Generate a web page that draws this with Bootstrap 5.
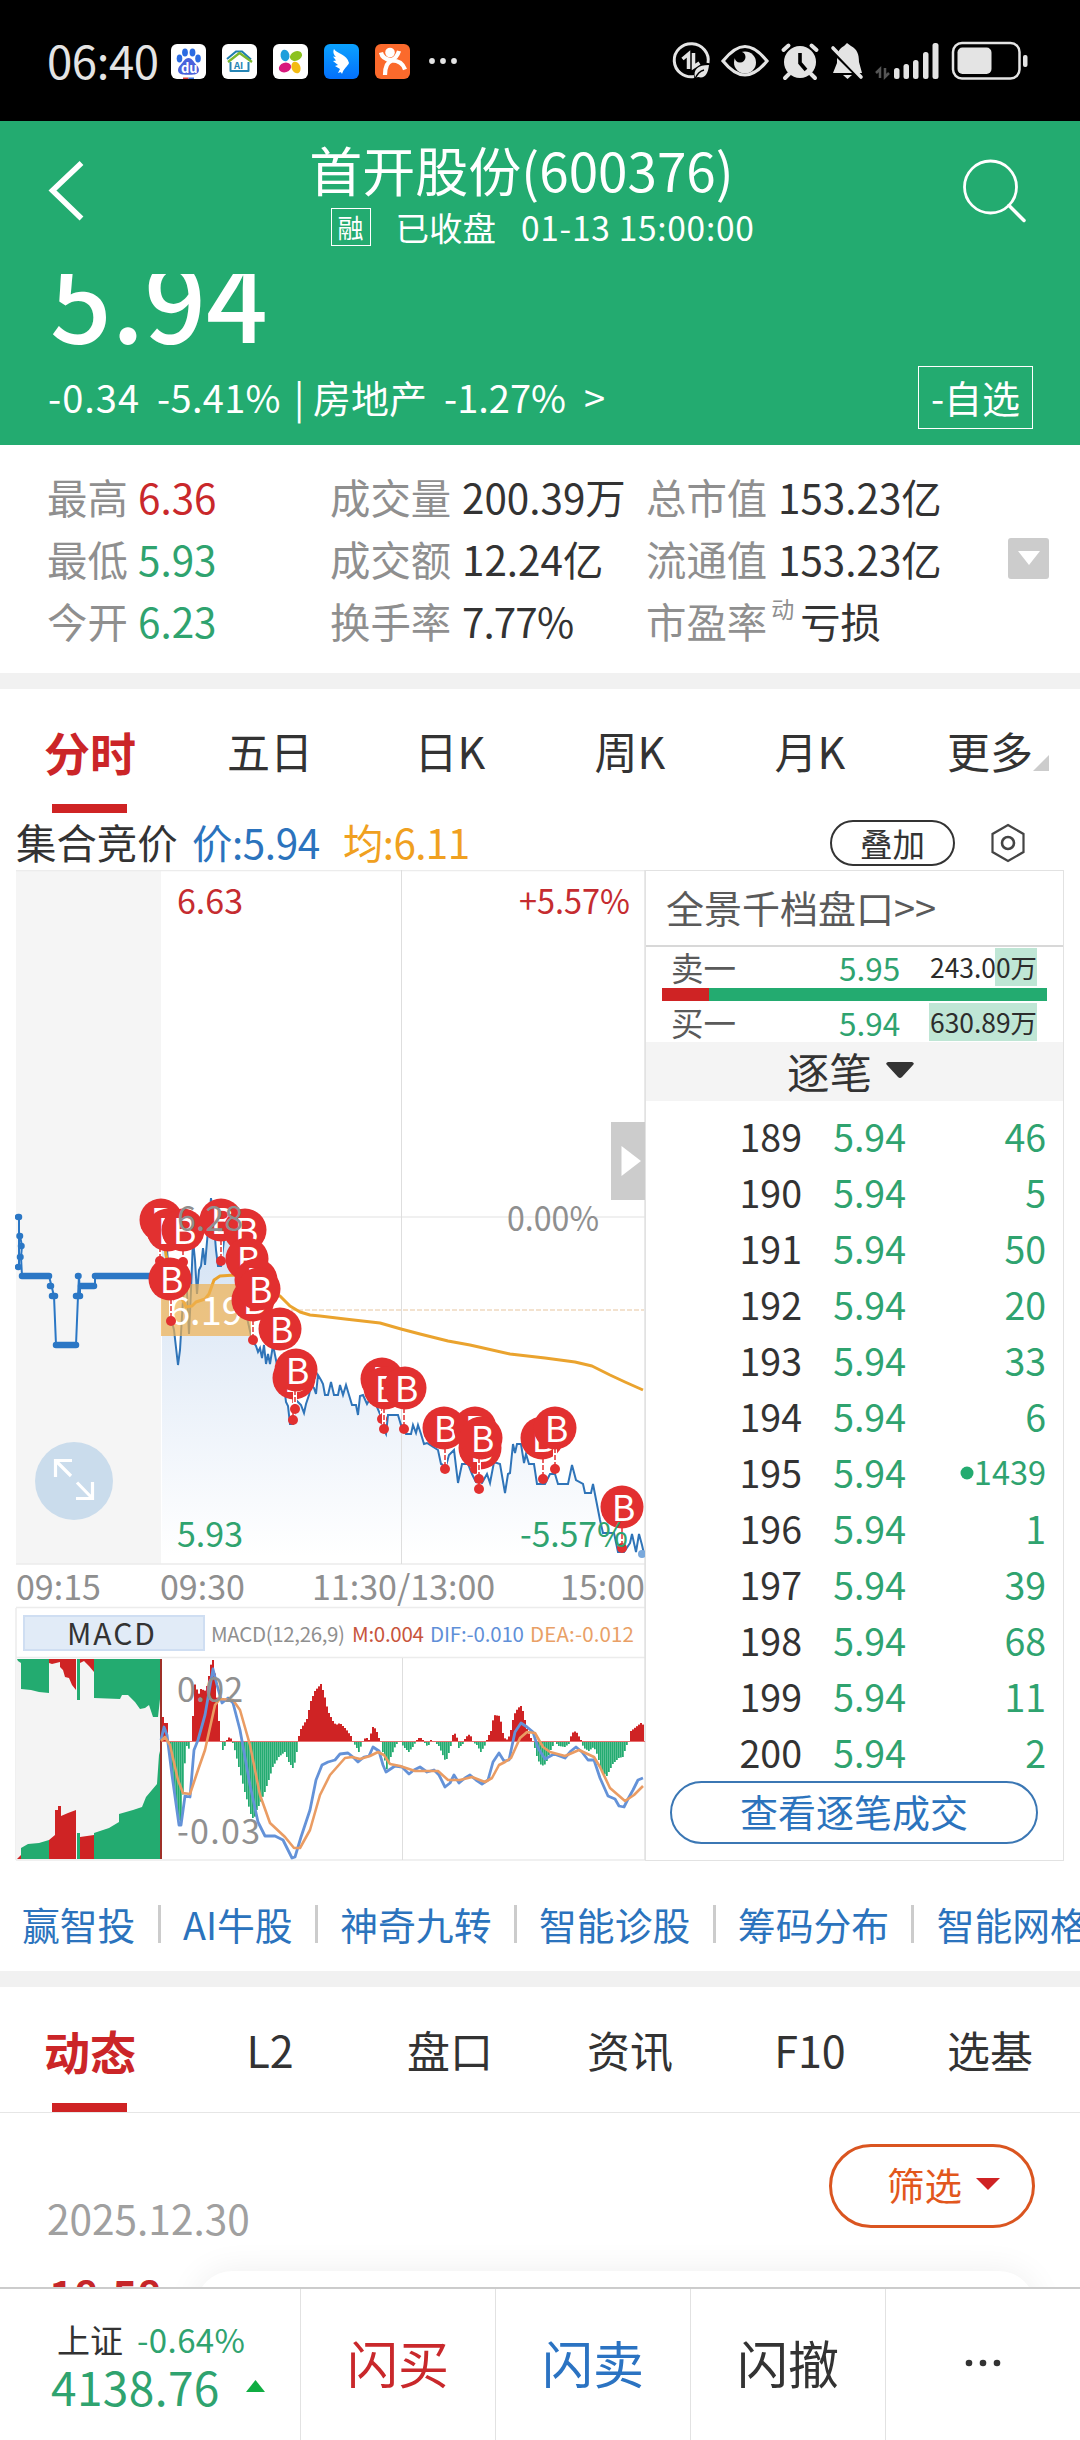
<!DOCTYPE html>
<html lang="zh-CN">
<head>
<meta charset="utf-8">
<meta name="viewport" content="width=device-width, initial-scale=1">
<title>首开股份(600376)</title>
<link href="https://cdn.jsdelivr.net/npm/bootstrap@5.3.0/dist/css/bootstrap.min.css" rel="stylesheet">
<style>
:root{--up:#c9282b;--down:#2fa36f;--brand:#23ab70;--ink:#333;--mute:#8f8f8f;--link:#2b73bd}
body{width:1080px;height:2440px;overflow:hidden;background:#fff;color:var(--ink);font-family:"Noto Sans CJK SC",sans-serif;line-height:1;white-space:nowrap}
svg{display:block;flex:none}
svg text{font-family:"Noto Sans CJK SC",sans-serif}
.up{color:var(--up)}.down{color:var(--down)}.mute{color:var(--mute)}
.status-bar{height:121px;background:#000;color:#e4e4e4;padding:0 50px 2px 47px}
.clock{font-size:45.5px;width:124px;letter-spacing:-.4px}
.app-icons{gap:16px}
.app-head{height:153px;background:var(--brand);color:#fff;padding:0 53px 0 48px}
.head-mid{width:640px;padding-top:20px}
.head-title{font-size:53px;height:56px;line-height:56px;margin-right:6px}
.head-sub{font-size:33.5px;height:40px;margin:10px 0 0 36px}
.rong{width:40px;height:38px;border:1px solid #fff;font-size:26px}
.quote{height:171px;background:var(--brand);color:#fff;padding:0 47px 0 48px}
.big-wrap{height:88px;overflow:hidden}
.big-price{font-size:108.5px;line-height:120px;margin-top:-38px;font-weight:500;padding-left:2px}
.quote-line{font-size:38px;height:71px}
.self-btn{width:115px;height:63px;border:1px solid #fff;font-size:38px}
.stats{height:228px;padding-top:22px;font-size:40.4px}
.stats .line{height:62px}
.c1{width:330px;padding-left:47px}.c2{width:316px}.c3{width:362px}
.c1 span:first-child{width:91px}.c2 span:first-child{width:132px}.c3 span:first-child{width:132px}
.sup{font-size:23px;align-self:flex-start;padding-top:6px;width:25px}
.drop-btn{width:41px;height:41px;background:#ccc;border-radius:3px}
.strip{height:16px;background:#f1f1f1}
.tabs-row{height:125px}
.tabs-row .tab-item{width:180px;font-size:43px;position:relative;color:var(--ink);padding:0}
.tabs-row .tab-item.active{color:#cb2528;font-weight:700;font-size:46px}
.tabs-row .tab-item.active::after{content:"";position:absolute;left:52px;bottom:0;width:75px;height:9px;background:#cf2324}
.corner{position:absolute;left:133px;bottom:42px}
.info-row{height:57px;padding:0 54px 0 16px;font-size:40.4px}
.pill{width:125px;height:46px;border:2px solid #333;border-radius:23px;font-size:32.5px;margin-top:2px}
.board{height:991px;padding-left:15px}
.depth{width:419px;border:1px solid #e2e2e2;margin-left:-1px}
.all-levels{height:76px;border-bottom:2px solid #d8d8d8;font-size:38px;color:#5a5a5a;padding:0 0 2px 20px}
.lvl{height:40px;padding:0 25px 0 25px;font-size:32.5px}
.lvl .who{width:168px;color:#5a5a5a}
.lvl .prc{width:90px;font-size:31.5px}
.lvl .qty{width:108px;height:38px;font-size:26.4px;color:#2c2c2c;padding-right:0}
.bs-bar{height:13px;margin:1px 16px 1px;background:var(--brand)}
.bs-bar div{background:#cf2324;width:47px}
.tick-head{height:59px;background:#f4f4f4;font-size:42.5px;padding:0 8px 2px 0}
.tick{height:56px;font-size:37.5px}
.tick .no{width:156px}.tick .p{width:104px}.tick .v{width:140px}
.detail-btn{width:368px;height:63px;border:2px solid #3b77b4;border-radius:32px;color:var(--link);font-size:38px;margin:2px 0 0 24px;padding-bottom:3px}
.links{height:110px;font-size:37.8px;color:var(--link);padding:15px 0 0 22px;overflow:hidden}
.links span{flex:none}
.links i{flex:none;width:3px;height:38px;background:#ccc;margin:0 22.3px}
.feed{height:175px;border-top:1px solid #e6e6e6;position:relative;overflow:hidden}
.filter-btn{position:absolute;right:45px;top:31px;width:206px;height:84px;border:3px solid #da5520;border-radius:42px;color:#e2571c;font-size:37.5px;padding:0 0 5px 23px}
.feed-date{position:absolute;left:47px;top:85px;font-size:40.6px;color:#a0a0a0}
.feed-time{position:absolute;left:49px;top:157px;font-size:42px;line-height:48px;font-weight:700;color:#c62629}
.feed-card{position:absolute;left:196px;right:45px;top:158px;height:90px;background:#fff;border-radius:36px;box-shadow:0 0 34px rgba(0,0,0,.07)}
.trade-bar{height:153px;border-top:2px solid #ccc}
.trade-bar>div+div{width:195px;border-left:1px solid #e2e2e2;font-size:51px;padding-bottom:4px}
.idx{width:300px;padding:31px 0 0 57px}
.idx .l1{font-size:33px;height:38px}.idx .l2{font-size:46px;height:56px;margin-left:-6px}
</style>
<script src="https://cdn.jsdelivr.net/npm/bootstrap@5.3.0/dist/js/bootstrap.bundle.min.js"></script>
</head>
<body class="d-flex flex-column">

<div class="status-bar d-flex align-items-center justify-content-between">
  <div class="d-flex align-items-center">
    <span class="clock">06:40</span>
    <div class="app-icons d-flex align-items-center pt-1">
      <svg width="35" height="35" viewBox="0 0 35 35"><rect width="35" height="35" rx="6" fill="#fff"/><g fill="#2a6be2"><ellipse cx="8.500" cy="14.500" rx="2.800" ry="4"/><ellipse cx="14" cy="8.500" rx="2.900" ry="3.900"/><ellipse cx="21.500" cy="8.500" rx="2.900" ry="3.900"/><ellipse cx="27" cy="14.500" rx="2.800" ry="4"/></g><path d="M17.500 14c4 0 5 4 8 7 4 4 3 9-2 9.500-3 .3-9 .3-12 0-5-.5-6-5.500-2-9.500 3-3 4-7 8-7z" fill="#4a62dc"/><text x="10" y="28.500" font-size="13" font-weight="700" fill="#fff">du</text><path d="M12 33.500h5.500V35H12z" fill="#d43b3b"/><path d="M17.500 33.500H23V35h-5.500z" fill="#3b6fd4"/></svg>
      <svg width="35" height="35" viewBox="0 0 35 35"><rect width="35" height="35" rx="6" fill="#fff"/><path d="M5 15 14 7.500h6l9 8" fill="none" stroke="#1f7fb0" stroke-width="2"/><path d="M6 18l11.500-9L30 18" fill="none" stroke="#7ab82e" stroke-width="2.300"/><path d="M8.500 18v9h18v-9" fill="none" stroke="#2585b5" stroke-width="2" stroke-linejoin="round"/><text x="12" y="24.500" font-size="9.500" font-weight="700" fill="#2585b5">AI</text></svg>
      <svg width="35" height="35" viewBox="0 0 35 35"><rect width="35" height="35" rx="6" fill="#fff"/><ellipse cx="12" cy="11.500" rx="4.400" ry="5.800" fill="#1f9fdc" transform="rotate(-12 12 11.500)"/><ellipse cx="23" cy="12" rx="6.300" ry="4.600" fill="#8cc220" transform="rotate(-22 23 12)"/><ellipse cx="12" cy="23.500" rx="6.300" ry="4.800" fill="#d8197d" transform="rotate(-18 12 23.500)"/><ellipse cx="23" cy="23.500" rx="4.400" ry="6" fill="#f3bb10" transform="rotate(-20 23 23.500)"/></svg>
      <svg width="35" height="35" viewBox="0 0 35 35"><defs><linearGradient id="wing" x2="0" y2="1"><stop stop-color="#0aa2ff"/><stop offset="1" stop-color="#0470fb"/></linearGradient></defs><rect width="35" height="35" rx="6" fill="url(#wing)"/><path d="M10 5c3 5 13 5 15 14-2 4-5 5-7 11-1-2-1-2-4-1l2-4-5-3 3-1-5-4 3-.5-3-4 3 .5C9 10 9 7 10 5z" fill="#fff"/></svg>
      <svg width="35" height="35" viewBox="0 0 35 35"><rect width="35" height="35" rx="6" fill="#fb6a2c"/><circle cx="15" cy="8.500" r="4.800" fill="#fff"/><path d="M6 8.500c1 5 5 7 10 7.500 4-1 6.500-4 8-9M10 31c0-9 2-13 7-14.500 6 0 11 3 13 9" fill="none" stroke="#fff" stroke-width="4.200"/></svg>
      <svg width="36" height="10" viewBox="0 0 36 10"><g fill="#e4e4e4"><circle cx="6" cy="5" r="2.900"/><circle cx="17" cy="5" r="2.900"/><circle cx="28" cy="5" r="2.900"/></g></svg>
    </div>
  </div>
  <svg width="360" height="50" viewBox="670 36 360 50" fill="#e4e4e4" class="mt-1">
    <g fill="none" stroke="#e4e4e4" stroke-width="3"><path d="M708 63a17 16.500 0 1 0-14 13.500"/><path d="M688.500 69V54l-6 5M693.500 53v14l6-4" stroke-width="3.500"/></g><path d="M695 78c-2-9 3-13 14-13-1 9-4 14-11 12z"/><path d="M695 79c2-5 5-8 9-9" stroke="#000" stroke-width="1.500" fill="none"/>
    <path d="M723 61c8-10 15-14.500 22-14.500S759 51 767 61c-8 10-15 14-22 14s-14-4-22-14z" fill="none" stroke="#e4e4e4" stroke-width="3.200"/><circle cx="745" cy="62.500" r="11"/><circle cx="740" cy="57" r="5.500" fill="#000"/>
    <circle cx="800" cy="62" r="16"/><path d="M800 53v10l6 7" stroke="#000" stroke-width="3.600" fill="none"/><g stroke="#e4e4e4" stroke-width="4" stroke-linecap="round"><path d="M783.500 50l5-4.500M816.500 50l-5-4.500M789 74l-4 4M811 74l4 4"/></g>
    <path d="M847 43l4 3c6 3 8 8 8 16l3 11h-29l4-10c0-9 1-14 7-17z"/><path d="M843 75h9l-4.500 4z"/><path d="M830 48l32 32" stroke="#000" stroke-width="4"/><path d="M833 48l28 29" stroke="#e4e4e4" stroke-width="3.600" stroke-linecap="round"/>
    <g stroke="#555" stroke-width="2.500" fill="none"><path d="M880 78V69l-4 4M885 68v9l4-4"/></g>
    <rect x="894" y="68" width="5.500" height="11" rx="2.500"/><rect x="903.500" y="64" width="5.500" height="15" rx="2.500"/><rect x="913" y="60" width="5.500" height="19" rx="2.500"/><rect x="923" y="52" width="5.500" height="27" rx="2.500"/><rect x="932.500" y="43" width="6" height="36" rx="2.500"/>
    <rect x="953" y="43" width="66.500" height="35.500" rx="9" fill="none" stroke="#e4e4e4" stroke-width="2.500"/><rect x="957.500" y="47.500" width="34" height="26.500" rx="5"/><rect x="1023" y="55" width="4.500" height="12" rx="2"/>
  </svg>
</div>

<header class="app-head d-flex justify-content-between">
  <svg width="40" height="64" viewBox="48 159 40 64" class="align-self-start" style="margin-top:38px"><path d="M81.500 163 52.500 190.500 81.500 218.500" fill="none" stroke="#fff" stroke-width="5.500"/></svg>
  <div class="head-mid d-flex flex-column align-items-center">
    <div class="head-title">首开股份(600376)</div>
    <div class="head-sub d-flex align-items-center">
      <span class="rong d-flex align-items-center justify-content-center">融</span><span style="margin:0 25px 0 25px">已收盘</span><span style="letter-spacing:.7px">01-13 15:00:00</span>
    </div>
  </div>
  <svg width="66" height="66" viewBox="961 158 66 66" style="margin-top:37px"><circle cx="990.500" cy="187" r="26" fill="none" stroke="#fff" stroke-width="2.800"/><path d="M1009 205.500 1024 220.500" stroke="#fff" stroke-width="3.500" stroke-linecap="round"/></svg>
</header>

<section class="quote">
  <div class="big-wrap"><div class="big-price">5.94</div></div>
  <div class="quote-line d-flex align-items-center justify-content-between">
    <div class="d-flex align-items-center"><span style="width:109px;letter-spacing:1px">-0.34</span><span style="width:137px;letter-spacing:.3px">-5.41%</span><span style="width:19px">|</span><span style="width:131px">房地产</span><span style="width:140px">-1.27%</span><span>&gt;</span></div>
    <span class="self-btn d-flex align-items-center justify-content-center">-自选</span>
  </div>
</section>

<section class="stats d-flex">
  <div>
    <div class="line d-flex align-items-center"><div class="c1 d-flex"><span class="mute">最高</span><span class="up">6.36</span></div><div class="c2 d-flex"><span class="mute">成交量</span><span>200.39万</span></div><div class="c3 d-flex"><span class="mute">总市值</span><span>153.23亿</span></div></div>
    <div class="line d-flex align-items-center"><div class="c1 d-flex"><span class="mute">最低</span><span class="down">5.93</span></div><div class="c2 d-flex"><span class="mute">成交额</span><span>12.24亿</span></div><div class="c3 d-flex"><span class="mute">流通值</span><span>153.23亿</span></div></div>
    <div class="line d-flex align-items-center"><div class="c1 d-flex"><span class="mute">今开</span><span class="down">6.23</span></div><div class="c2 d-flex"><span class="mute">换手率</span><span style="letter-spacing:-.9px">7.77%</span></div><div class="d-flex align-self-stretch align-items-center"><span class="mute">市盈率</span><span class="sup mute ms-1">动</span><span class="ms-1">亏损</span></div></div>
  </div>
  <div class="drop-btn d-flex align-items-center justify-content-center ms-auto" style="margin:71px 31px 0 0"><svg width="22" height="14" viewBox="0 0 22 14"><path d="M0 0h22L11 14z" fill="#fff"/></svg></div>
</section>

<div class="strip"></div>

<nav class="tabs-row d-flex">
  <div class="tab-item active d-flex align-items-center justify-content-center">分时</div>
  <div class="tab-item d-flex align-items-center justify-content-center">五日</div>
  <div class="tab-item d-flex align-items-center justify-content-center">日K</div>
  <div class="tab-item d-flex align-items-center justify-content-center">周K</div>
  <div class="tab-item d-flex align-items-center justify-content-center">月K</div>
  <div class="tab-item d-flex align-items-center justify-content-center">更多<svg class="corner" width="16" height="16" viewBox="0 0 16 16"><path d="M16 0v16H0z" fill="#ccc"/></svg></div>
</nav>

<div class="info-row d-flex align-items-center">
  <span style="width:176px">集合竞价</span><span style="width:151px;color:#2b73bd;letter-spacing:-.4px">价:5.94</span><span style="color:#f0a020;letter-spacing:-.6px">均:6.11</span>
  <span class="pill d-flex align-items-center justify-content-center ms-auto">叠加</span>
  <svg width="36" height="42" viewBox="0 0 36 42" style="margin:2px 0 0 35px"><path d="M18 3 33.500 12v18L18 39 2.500 30V12z" fill="none" stroke="#444" stroke-width="2.200"/><circle cx="18" cy="21" r="6" fill="none" stroke="#444" stroke-width="2.600"/></svg>
</div>

<section class="board d-flex">
  <svg width="631" height="991" viewBox="15 870 631 991">
    <defs><linearGradient id="fillg" gradientUnits="userSpaceOnUse" x1="0" y1="1200" x2="0" y2="1556"><stop stop-color="#cfe0f3"/><stop offset=".45" stop-color="#e6eef8"/><stop offset="1" stop-color="#fff"/></linearGradient></defs>
    <rect x="16" y="870" width="145" height="694" fill="#f5f5f5"/>
    <g stroke="#ececec" stroke-width="1.500" fill="none"><path d="M16 870.500H645M161 1217H645M16 1564H645M16 1607.500H645M16 1657.500H645M16 1860H645M16 1608V1860"/></g>
    <path d="M645 870V1860" stroke="#e2e2e2" stroke-width="1.500"/>
    <path id="area" fill="url(#fillg)"/>
    <path d="M401.500 870V1564M402.500 1658V1860" stroke="#dedede" stroke-width="1"/>
    <path d="M270 1310H644" stroke="#efd9c0" stroke-width="1.500" stroke-dasharray="5 2"/>
    <g fill="none" stroke="#2b77c5" stroke-linejoin="round">
      <path d="M19 1217V1267M20 1236 22 1246 21 1257 22 1276M49 1276 54 1296 56 1345M76 1345 78 1296 79 1276 80 1296V1286M95 1286V1276" stroke-width="2"/>
      <path d="M18 1217H19M18 1267H18.500M19.500 1236H20M21 1246H21.500M20 1257H20.500M22 1276H49M50 1286H51M52 1296H55M56 1345H76M76 1296H80M78 1276H78.500M81 1286H94M95 1276H155" stroke-width="6.500" stroke-linecap="round"/>
    </g>
    <path id="price" fill="none" stroke="#2f74b8" stroke-width="2"/>
    <path id="avg" fill="none" stroke="#eaa32e" stroke-width="3" stroke-linejoin="round"/>
    <rect x="161" y="1284" width="90" height="52" fill="#efb050" opacity=".7"/>
    <text x="169" y="1325" font-size="38" fill="#fff">6.19</text>
    <g id="pins"></g>
    <g font-size="34">
      <g fill="#c52c30"><text x="177" y="914">6.63</text><text x="519" y="914" textLength="111" lengthAdjust="spacingAndGlyphs">+5.57%</text></g>
      <g fill="#8f8f8f"><text x="177" y="1231">6.28</text><text x="507" y="1231" textLength="92" lengthAdjust="spacingAndGlyphs">0.00%</text>
        <text x="16" y="1600">09:15</text><text x="160" y="1600">09:30</text><text x="312" y="1600">11:30/13:00</text><text x="645" y="1600" text-anchor="end">15:00</text></g>
      <g fill="#2fa36f"><text x="177" y="1547">5.93</text><text x="520" y="1547" textLength="108" lengthAdjust="spacingAndGlyphs">-5.57%</text></g>
    </g>
    <circle cx="642" cy="1554" r="4" fill="#7aa9dc"/>
    <circle cx="74" cy="1481" r="39" fill="#cadcec"/>
    <path d="M71 1476 55.500 1460.500M55.500 1477V1460.500H72M77 1482.500 92.500 1498.500M92.500 1482V1498.500H76" fill="none" stroke="#fff" stroke-width="3.200"/>
    <rect x="611" y="1122" width="34" height="78" fill="#ccc"/><path d="M621.500 1146 641 1161 621.500 1176z" fill="#fff"/>

    <rect x="24" y="1616" width="180" height="34" fill="#e1ebf7" stroke="#cfdef2" stroke-width="2"/>
    <text x="111" y="1645" font-size="30" text-anchor="middle" fill="#333" textLength="88">MACD</text>
    <g font-size="20.500"><text x="211" y="1641.500" fill="#8f8f8f" textLength="134">MACD(12,26,9)</text><text x="352" y="1641.500" fill="#c8553c" textLength="72">M:0.004</text><text x="430" y="1641.500" fill="#5f8fd8" textLength="94">DIF:-0.010</text><text x="530" y="1641.500" fill="#e9a066" textLength="104">DEA:-0.012</text></g>

    <rect x="16" y="1659" width="145" height="200" fill="#f4f4f4"/>
    <g fill="#23ab70">
      <path d="M17 1659h4v4l-3-2zM21 1659h28v34l-10-1-8-2-10-1zM77 1659h3v41h-3zM94 1659h67v31l-3 27h-5l-4-12-4 3-5 1-5-7-7-7-6 0-2 4-26-1z"/>
      <path d="M21 1859v-11l7-4 11-1 10-3v19zM77 1833h3v26h-3zM94 1859v-26l15-5 10-6v-8l14-4 9-3 4-10 11-13 2-29 2-8v112z"/>
    </g>
    <g fill="#cf2324">
      <path d="M49 1659h27v31l-4-5-3-7-4-1-2-7-3-3v-5l-8 2-3-1zM80 1659h14v13l-5-6-5-5-4 2z"/>
      <path d="M17 1859l4-4v4zM49 1859v-19l6-5v-25h3v-4h3v10l7-3 8-3v49zM80 1859v-22l14-2v24z"/>
    </g>
    <path d="M161 1659V1859" stroke="#9f3028" stroke-width="2"/>
    <path d="M162 1741.500H645" stroke="#e86e6e" stroke-width="1"/>
    <g id="bars"></g>
    <path id="dif" fill="none" stroke="#6492d8" stroke-width="2.800" stroke-linejoin="round"/>
    <path id="dea" fill="none" stroke="#ea9c63" stroke-width="2.600" stroke-linejoin="round"/>
    <g font-size="34" fill="#909090"><text x="177" y="1702">0.02</text><text x="177" y="1844" textLength="83">-0.03</text></g>
  </svg>

  <div class="depth d-flex flex-column">
    <div class="all-levels d-flex align-items-center">全景千档盘口&gt;&gt;</div>
    <div class="lvl d-flex align-items-center"><span class="who">卖一</span><span class="prc down">5.95</span><span class="qty d-flex align-items-center justify-content-end" style="background:linear-gradient(to right,transparent 61%,#bfe6d5 61%)">243.00万</span></div>
    <div class="bs-bar d-flex"><div></div></div>
    <div class="lvl d-flex align-items-center"><span class="who">买一</span><span class="prc down">5.94</span><span class="qty d-flex align-items-center justify-content-end" style="background:#bfe6d5">630.89万</span></div>
    <div class="tick-head d-flex align-items-center justify-content-center">逐笔<svg width="28" height="17" viewBox="0 0 28 17" style="margin-left:14px"><path d="M2 0h24q3 1 1 3L16 15q-2 2-4 0L1 3q-2-2 1-3z" fill="#333"/></svg></div>
    <div id="ticks" style="padding-top:6px"></div>
    <div class="detail-btn d-flex align-items-center justify-content-center">查看逐笔成交</div>
  </div>
</section>

<div class="links d-flex align-items-center"><span>赢智投</span><i></i><span>AI牛股</span><i></i><span>神奇九转</span><i></i><span>智能诊股</span><i></i><span>筹码分布</span><i></i><span>智能网格</span></div>
<div class="strip"></div>

<nav class="tabs-row d-flex">
  <div class="tab-item active d-flex align-items-center justify-content-center">动态</div>
  <div class="tab-item d-flex align-items-center justify-content-center">L2</div>
  <div class="tab-item d-flex align-items-center justify-content-center">盘口</div>
  <div class="tab-item d-flex align-items-center justify-content-center">资讯</div>
  <div class="tab-item d-flex align-items-center justify-content-center">F10</div>
  <div class="tab-item d-flex align-items-center justify-content-center">选基</div>
</nav>

<section class="feed">
  <div class="feed-card"></div>
  <div class="feed-date">2025.12.30</div>
  <div class="feed-time">18:58</div>
  <div class="filter-btn d-flex align-items-center justify-content-center">筛选<svg width="24" height="12" viewBox="0 0 24 12" style="margin-left:14px"><path d="M0 0h24L12 12z" fill="#cf2324"/></svg></div>
</section>

<footer class="trade-bar d-flex">
  <div class="idx">
    <div class="l1 d-flex align-items-center"><span style="width:80px">上证</span><span class="down" style="letter-spacing:.4px">-0.64%</span></div>
    <div class="l2 d-flex align-items-center down"><span style="width:195px;letter-spacing:.4px">4138.76</span><svg width="19" height="12" viewBox="0 0 19 12"><path d="M9.500 0 19 12H0z" fill="#10ad42"/></svg></div>
  </div>
  <div class="d-flex align-items-center justify-content-center up">闪买</div>
  <div class="d-flex align-items-center justify-content-center" style="color:#2b73c2">闪卖</div>
  <div class="d-flex align-items-center justify-content-center">闪撤</div>
  <div class="d-flex align-items-center justify-content-center"><svg width="36" height="8" viewBox="0 0 36 8"><g fill="#333"><circle cx="4" cy="4" r="3.300"/><circle cx="18" cy="4" r="3.300"/><circle cx="32" cy="4" r="3.300"/></g></svg></div>
</footer>

<script>
const price="162,1240 165,1225 168,1262 171,1318 174,1330 178,1365 180,1350 183,1300 186,1270 189,1334 191,1290 193,1240 195,1260 197,1294 199,1270 201,1266 203,1248 205,1265 208,1230 211,1198 214,1225 216,1250 218,1266 221,1266 224,1240 228,1222 234,1250 240,1272 244,1300 248,1322 252,1340 256,1346 258,1352 260,1348 262,1358 264,1345 266,1364 268,1354 270,1364 273,1345 278,1370 284,1385 286,1402 288,1406 290,1424 293,1424 296,1400 301,1405 304,1413 306,1404 309,1395 311,1385 314,1388 316,1394 318,1375 321,1380 323,1384 325,1395 328,1395 331,1382 334,1395 338,1395 340,1385 343,1395 346,1385 349,1395 352,1405 356,1405 358,1415 360,1396 363,1395 367,1404 372,1395 380,1414 384,1430 386,1434 388,1415 398,1415 401,1425 406,1434 411,1434 413,1425 416,1433 418,1425 421,1434 424,1444 427,1443 438,1450 441,1464 446,1466 449,1455 454,1450 458,1483 462,1464 468,1464 472,1474 476,1482 482,1483 487,1474 490,1483 494,1462 500,1464 505,1493 508,1474 510,1473 513,1444 515,1453 517,1444 521,1444 524,1463 526,1454 529,1464 534,1464 537,1484 545,1484 550,1474 555,1474 558,1484 568,1484 572,1465 576,1480 583,1484 585,1493 591,1493 593,1484 600,1520 603,1533 614,1533 618,1552 624,1552 630,1543 632,1534 636,1552 639,1534 642,1545 644,1554";
const avg="162,1225 166,1255 170,1270 178,1290 186,1307 192,1306 196,1302 205,1299 209,1294 214,1280 220,1276 235,1275 255,1283 280,1296 290,1306 300,1312 310,1315 320,1316 345,1319 380,1323 401,1329 420,1334 448,1341 470,1345 510,1354 545,1358 575,1362 592,1366 610,1375 625,1382 643,1390";
const dif="161,1740 164,1727 167,1735 172,1775 179,1825 181,1825 185,1796 190,1797 194,1750 198,1740 205,1715 213,1669 217,1685 222,1703 228,1698 233,1703 240,1730 250,1785 258,1822 265,1836 275,1836 283,1840 292,1858 295,1857 301,1837 310,1810 316,1780 322,1765 328,1762 335,1760 340,1754 348,1753 353,1757 358,1762 364,1757 369,1756 373,1747 379,1751 383,1765 386,1772 395,1766 402,1767 409,1774 414,1770 420,1767 427,1772 434,1770 439,1775 445,1787 450,1783 454,1775 459,1783 465,1778 470,1775 476,1780 482,1784 488,1780 493,1762 499,1753 504,1761 509,1760 515,1732 521,1723 527,1727 533,1732 538,1748 545,1759 554,1754 565,1758 571,1751 576,1747 582,1752 588,1760 594,1760 600,1778 608,1796 615,1799 619,1806 624,1807 628,1799 633,1790 638,1780 643,1778";
const dea="161,1741 165,1737 170,1745 178,1780 183,1793 190,1794 198,1770 205,1750 215,1705 220,1699 233,1700 240,1710 250,1745 260,1795 270,1823 285,1837 294,1848 300,1848 310,1830 320,1795 330,1775 345,1758 352,1757 360,1759 370,1756 378,1752 384,1755 390,1764 400,1766 415,1771 438,1771 448,1780 460,1780 472,1777 485,1782 492,1778 499,1765 505,1762 511,1758 520,1738 527,1732 535,1733 543,1747 550,1752 565,1756 579,1750 594,1757 600,1767 610,1788 625,1801 634,1795 643,1786";
const $=id=>document.getElementById(id);
$("price").setAttribute("d","M"+price);$("avg").setAttribute("d","M"+avg);$("dif").setAttribute("d","M"+dif);$("dea").setAttribute("d","M"+dea);
$("area").setAttribute("d","M"+price+" 644,1563 162,1563z");

const hist=[161,30,163,18,166,18,168,0,170,-25,173,-50,179,-84,181,-75,183,-30,186,-4,189,-8,190,0,192,25,193,55,195,58,197,45,200,52,205,50,208,65,211,82,213,80,215,55,218,20,220,0,222,-8,225,-2,227,4,231,2,233,-4,238,-25,244,-50,250,-72,253,-78,256,-68,259,-62,264,-50,268,-38,272,-25,278,-15,284,-10,288,-20,292,-26,295,-18,297,-2,298,5,300,12,306,22,310,40,314,50,320,57,323,48,327,30,332,20,335,16,339,18,345,12,350,5,352,0,355,-4,358,-10,361,-2,365,4,368,1,372,14,375,12,378,3,380,0,382,-10,386,-27,390,-15,395,-3,399,1,403,-5,408,-10,412,-5,415,0,419,4,424,-1,427,-5,430,1,434,0,438,-4,445,-20,449,-8,451,0,452,6,455,8,458,-6,462,-2,465,4,469,7,472,0,476,-3,480,-10,485,-2,487,4,490,10,493,26,499,25,502,8,505,0,509,6,513,26,517,33,520,35,522,30,526,12,530,3,533,-2,537,-18,541,-24,545,-22,549,-10,554,0,558,-4,564,-5,568,-2,571,8,575,10,580,1,583,-6,588,-9,593,-5,597,-14,601,-30,606,-34,612,-22,618,-16,622,-15,626,-3,628,0,630,10,635,14,640,18,645,14];
let h="";
for(let x=162;x<644;x+=2){let i=0;while(hist[i+2]<x)i+=2;const v=hist[i+1]+(hist[i+3]-hist[i+1])*(x-hist[i])/(hist[i+2]-hist[i]);
 if(Math.abs(v)<1)continue;
 h+=`<rect x="${x}" y="${v>0?1741-v:1742}" width="${v>0?2:1.75}" height="${Math.abs(v)}" fill="${v>0?'#cf2324':'#23ab70'}"/>`}
$("bars").innerHTML=h;

const pins=[[161,1220,160,1261],[168,1230],[183,1230,183,1262],[170,1279,171,1321],[221,1220,221,1261],[245,1230],[247,1259],[256,1280],[253,1300,253,1340],[259,1289],[280,1329],[294,1378,293,1420],[296,1370,295,1409],[382,1379,382,1419],[385,1388,384,1429],[405,1388,404,1429],[444,1428,445,1469],[475,1428,475,1469],[480,1448,479,1489],[481,1438,479,1479],[542,1438,543,1479],[555,1428,555,1469],[622,1507,622,1548]];
$("pins").innerHTML=pins.map(([x,y,a,b])=>(a?`<path d="M${a} ${y+20}V${b}" stroke="#fff" stroke-width="4"/><path d="M${a} ${y+20}V${b}" stroke="#e23030" stroke-width="1.500" stroke-dasharray="5 2"/><circle cx="${a}" cy="${b}" r="5" fill="#e23030"/>`:"")+`<circle cx="${x}" cy="${y}" r="21.500" fill="#e23030"/><text x="${x+1.5}" y="${y+13.5}" font-size="36" fill="#fff" text-anchor="middle">B</text>`).join("");

$("ticks").innerHTML=[46,5,50,20,33,6,1439,1,39,68,11,2].map((v,i)=>`<div class="tick d-flex align-items-center"><span class="no text-end">${189+i}</span><span class="p text-end down">5.94</span><span class="v d-flex align-items-center justify-content-end down"${v>999?' style="font-size:32.500px"':''}>${v>999?'<svg width="14" height="14" viewBox="0 0 14 14" class="mt-1"><circle cx="7" cy="7" r="6.500" fill="#23ab70"/></svg>':''}${v}</span></div>`).join("");
</script>
</body>
</html>
